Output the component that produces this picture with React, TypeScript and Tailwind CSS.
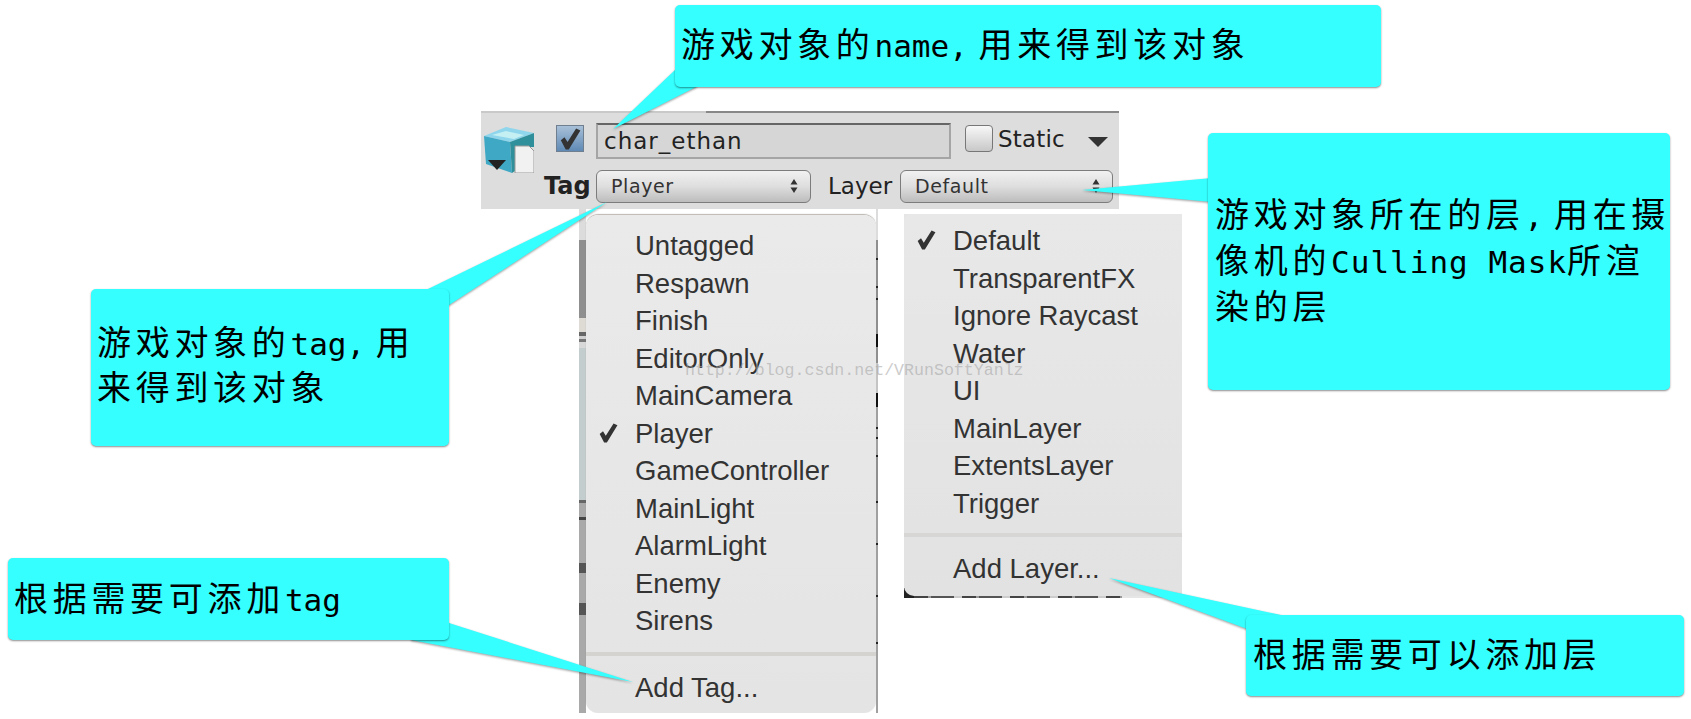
import type { ReactNode } from 'react';

const tagItems = ['Untagged', 'Respawn', 'Finish', 'EditorOnly', 'MainCamera', 'Player', 'GameController', 'MainLight', 'AlarmLight', 'Enemy', 'Sirens'];
const layerItems = ['Default', 'TransparentFX', 'Ignore Raycast', 'Water', 'UI', 'MainLayer', 'ExtentsLayer', 'Trigger'];

// noise of the inspector that shows beside the tag menu
const leftStrip = [
  { h: 31, c: '#dcdcdc' }, { h: 78, c: '#8f8f8f' }, { h: 14, c: '#dedbd5' }, { h: 4, c: '#666666' }, { h: 3, c: '#d0d0d0' }, { h: 3, c: '#777777' },
  { h: 6, c: '#d8d8d8' }, { h: 152, c: '#c3cdcd' }, { h: 3, c: '#666666' }, { h: 14, c: '#a9a9a9' }, { h: 3, c: '#444444' }, { h: 43, c: '#a9a9a9' },
  { h: 10, c: '#555555' }, { h: 30, c: '#a9a9a9' }, { h: 12, c: '#555555' }, { h: 98, c: '#a9a9a9' },
];
const rightStrip = [
  { h: 31, c: '#dcdcdc' }, { h: 18, c: '#8f8f8f' }, { h: 2, c: '#222222' }, { h: 26, c: '#8f8f8f' }, { h: 2, c: '#222222' }, { h: 10, c: '#8f8f8f' },
  { h: 2, c: '#222222' }, { h: 34, c: '#8f8f8f' }, { h: 13, c: '#111111' }, { h: 16, c: '#8f8f8f' }, { h: 30, c: '#c4c4c4' }, { h: 14, c: '#111111' },
  { h: 20, c: '#a0a0a0' }, { h: 2, c: '#222222' }, { h: 8, c: '#a0a0a0' }, { h: 2, c: '#222222' }, { h: 16, c: '#a0a0a0' }, { h: 2, c: '#222222' },
  { h: 44, c: '#8f8f8f' }, { h: 2, c: '#222222' }, { h: 40, c: '#a0a0a0' }, { h: 2, c: '#222222' }, { h: 50, c: '#a0a0a0' }, { h: 2, c: '#222222' },
  { h: 45, c: '#a0a0a0' }, { h: 2, c: '#222222' }, { h: 69, c: '#a0a0a0' },
];

function Callout({ className, children }: { className: string; children: ReactNode }) {
  return (
    <div
      className={`absolute rounded-[5px] bg-[#35ffff] text-[34px] tracking-[4.7px] whitespace-pre text-black shadow-[0_1px_2px_rgba(0,0,0,0.45)] font-['Noto_Sans_CJK_SC',sans-serif] ${className}`}
    >
      {children}
    </div>
  );
}

function Latin({ children }: { children: ReactNode }) {
  return <span className="font-['DejaVu_Sans_Mono',monospace] text-[31px] leading-[0] tracking-normal">{children}</span>;
}

function Comma() {
  return <span className="font-['DejaVu_Sans_Mono',monospace] text-[31px] leading-[0] tracking-[-4px]">, </span>;
}

function Check({ className }: { className: string }) {
  return (
    <svg viewBox="0 0 18 18" className={className}>
      <path d="M1.5 10 L4.5 7.5 L7 11.5 L14 0.5 L17.5 2 L8 17.5 L5.5 17.5 Z" fill="#333333" />
    </svg>
  );
}

function MenuItem({ label, checked }: { label: string; checked?: boolean }) {
  return (
    <div className="relative flex h-[37.5px] items-center pl-[49px]">
      {checked && <Check className="absolute left-[12px] top-[8px] h-[20px] w-[20px]" />}
      {label}
    </div>
  );
}

function Popup({ label, className }: { label: string; className: string }) {
  return (
    <div
      className={`flex h-[33px] items-center justify-between rounded-[6px] border border-[#7c7c7c] bg-gradient-to-b from-[#f1f1f1] via-[#dedede] to-[#bdbdbd] pl-[14px] pr-[12px] font-['DejaVu_Sans',sans-serif] text-[19px] tracking-[0.6px] text-[#333] ${className}`}
    >
      {label}
      <svg viewBox="0 0 8 16" className="h-4 w-2">
        <path d="M4 1 L7.5 6.5 H0.5 Z M4 15 L0.5 9.5 H7.5 Z" fill="#333333" />
      </svg>
    </div>
  );
}

export default function App() {
  return (
    <div className="relative h-[719px] w-[1691px] overflow-hidden bg-white">
      {/* inspector header */}
      <div className="ml-[481px] pt-[111px]">
        <div className="h-[98px] w-[638px] bg-[#dddddd]">
          <div className="flex h-[2px]">
            <div className="w-[225px] bg-[#c9c9c9]" />
            <div className="flex-1 bg-[#888888]" />
          </div>
          <div className="flex pl-[3px]">
            <svg viewBox="0 0 50 46" className="mt-[14px] h-[46px] w-[50px]">
              <path d="M0 9 L22 0 L50 6 L26 15 Z" fill="#8fd6ec" />
              <path d="M0 9 L26 15 L28 46 L2 37 Z" fill="#3fa8c4" />
              <path d="M26 15 L50 6 L50 20 L31 20 L31 44 L28 46 Z" fill="#2f8f9a" />
              <path d="M8 8 L30 12 L40 8 L22 4 Z" fill="#c4f0f4" />
              <path d="M31 19 H45 L50 24 V46 H31 Z" fill="#f1f1f1" stroke="#9a9a9a" strokeWidth="1" />
              <path d="M4 33 H22 L13 43 Z" fill="#222222" />
            </svg>
            <div className="ml-[8px] flex flex-col">
              <div className="mt-[10px] flex h-[36px] items-start">
                <div className="ml-[14px] mt-[2px] flex h-[27px] w-[28px] items-center justify-center border border-[#6f7f8f] bg-gradient-to-b from-[#a9c0d8] to-[#5f8ab5]">
                  <Check className="h-[22px] w-[22px]" />
                </div>
                <div className="ml-[12px] flex h-[36px] w-[355px] items-center border-2 border-[#a5a5a5] border-t-[#666666] bg-[#d6d6d6] pl-[6px] font-['DejaVu_Sans',sans-serif] text-[23px] tracking-[1px] text-[#222]">
                  char_ethan
                </div>
                <div className="ml-[14px] mt-[2px] h-[27px] w-[28px] rounded-[4px] border border-[#777777] bg-gradient-to-b from-[#f8f8f8] to-[#c8c8c8]" />
                <div className="ml-[5px] mt-[1px] w-[67px] font-['DejaVu_Sans',sans-serif] text-[23px] leading-[30px] tracking-[0.2px] text-[#222]">Static</div>
                <svg viewBox="0 0 20 10" className="ml-[23px] mt-[14px] h-[10px] w-[20px]">
                  <path d="M0 0 H20 L10 10 Z" fill="#333333" />
                </svg>
              </div>
              <div className="mt-[9px] flex items-center">
                <div className="w-[48px] pl-[2px] font-['DejaVu_Sans',sans-serif] text-[24px] font-bold text-[#222]">Tag</div>
                <Popup label="Player" className="ml-[6px] w-[215px]" />
                <div className="ml-[17px] w-[64px] font-['DejaVu_Sans',sans-serif] text-[23px] text-[#222]">Layer</div>
                <Popup label="Default" className="ml-[8px] w-[213px]" />
              </div>
            </div>
          </div>
        </div>
      </div>

      {/* dropdown menus */}
      <div className="ml-[579px] flex items-start font-['Liberation_Sans',sans-serif] text-[27.5px] text-[#333]">
        <div className="flex h-[504px] w-[299px]">
          <div className="flex w-[7px] flex-col">
            {leftStrip.map((s, i) => (
              <div key={i} style={{ height: s.h, background: s.c }} />
            ))}
          </div>
          <div className="mt-[6px] h-[498px] w-[290px] rounded-[12px] bg-gradient-to-b from-[#eaeaeb] to-[#e4e4e4] pt-[12px] shadow-[0_-1px_1px_rgba(120,110,100,0.5)]">
            {tagItems.map((t) => (
              <MenuItem key={t} label={t} checked={t === 'Player'} />
            ))}
            <div className="mt-[12px] h-[4px] bg-[#d5d3d0]" />
            <div className="mt-[13px]">
              <MenuItem label="Add Tag..." />
            </div>
          </div>
          <div className="flex w-[2px] flex-col">
            {rightStrip.map((s, i) => (
              <div key={i} style={{ height: s.h, background: s.c }} />
            ))}
          </div>
        </div>
        <div className="relative ml-[26px] mt-[5px] h-[384px] w-[278px] bg-[#e6e6e7]">
          <div className="absolute bottom-0 left-0 h-[10px] w-[10px] bg-[#222222]" />
          <div className="absolute bottom-0 left-[10px] right-[60px] h-[2px] bg-[repeating-linear-gradient(90deg,#444444_0_14px,#999999_14px_17px,#555555_17px_40px,#cccccc_40px_48px)]" />
          <div className="relative h-[382px] rounded-bl-[10px] rounded-tl-[8px] bg-gradient-to-b from-[#e8e8e9] to-[#e2e2e2] pt-[8px]">
            {layerItems.map((t) => (
              <MenuItem key={t} label={t} checked={t === 'Default'} />
            ))}
            <div className="mt-[11px] h-[4px] bg-[#d7d6d4]" />
            <div className="mt-[13px]">
              <MenuItem label="Add Layer..." />
            </div>
          </div>
        </div>
      </div>

      {/* watermark */}
      <div className="absolute left-[685px] top-[360px] font-['Liberation_Mono',monospace] text-[16.6px] leading-[22px] whitespace-pre text-[#a8a8a8]/60">
        http://blog.csdn.net/VRunSoftYanlz
      </div>

      {/* callout tails */}
      <svg viewBox="0 0 1691 719" className="absolute left-0 top-0 h-[719px] w-[1691px] drop-shadow-[0_1px_1px_rgba(0,0,0,0.4)]">
        <path d="M680 70 L675 70 L613 129 L696 87 L700 80 Z" fill="#35ffff" />
        <path d="M428 292 L428 289 L607 202 L449 305 L440 305 Z" fill="#35ffff" />
        <path d="M449 623 L633 682 L411 640 L411 636 Z" fill="#35ffff" />
        <path d="M1212 178 L1082 190 L1212 202 Z" fill="#35ffff" />
        <path d="M1250 630 L1109 578 L1281 615 L1281 620 Z" fill="#35ffff" />
      </svg>

      {/* callouts */}
      <Callout className="left-[675px] top-[5px] h-[82px] w-[706px] pl-[6px] pt-[15px] leading-[45px]">
        游戏对象的<Latin>name</Latin><Comma />用来得到该对象
      </Callout>
      <Callout className="left-[91px] top-[289px] h-[157px] w-[358px] pl-[6px] pt-[29px] leading-[45px]">
        <div>游戏对象的<Latin>tag</Latin><Comma />用</div>
        <div>来得到该对象</div>
      </Callout>
      <Callout className="left-[8px] top-[558px] h-[82px] w-[441px] pl-[6px] pt-[16px] leading-[45px]">
        根据需要可添加<Latin>tag</Latin>
      </Callout>
      <Callout className="left-[1208px] top-[133px] h-[257px] w-[462px] pl-[7px] pt-[57px] leading-[46px]">
        <div>游戏对象所在的层<Comma />用在摄</div>
        <div>像机的<span className="font-['DejaVu_Sans_Mono',monospace] text-[31px] leading-[0] tracking-[1px]">Culling Mask</span>所渲</div>
        <div>染的层</div>
      </Callout>
      <Callout className="left-[1246px] top-[615px] h-[81px] w-[438px] pl-[7px] pt-[15px] leading-[45px]">
        根据需要可以添加层
      </Callout>
    </div>
  );
}
